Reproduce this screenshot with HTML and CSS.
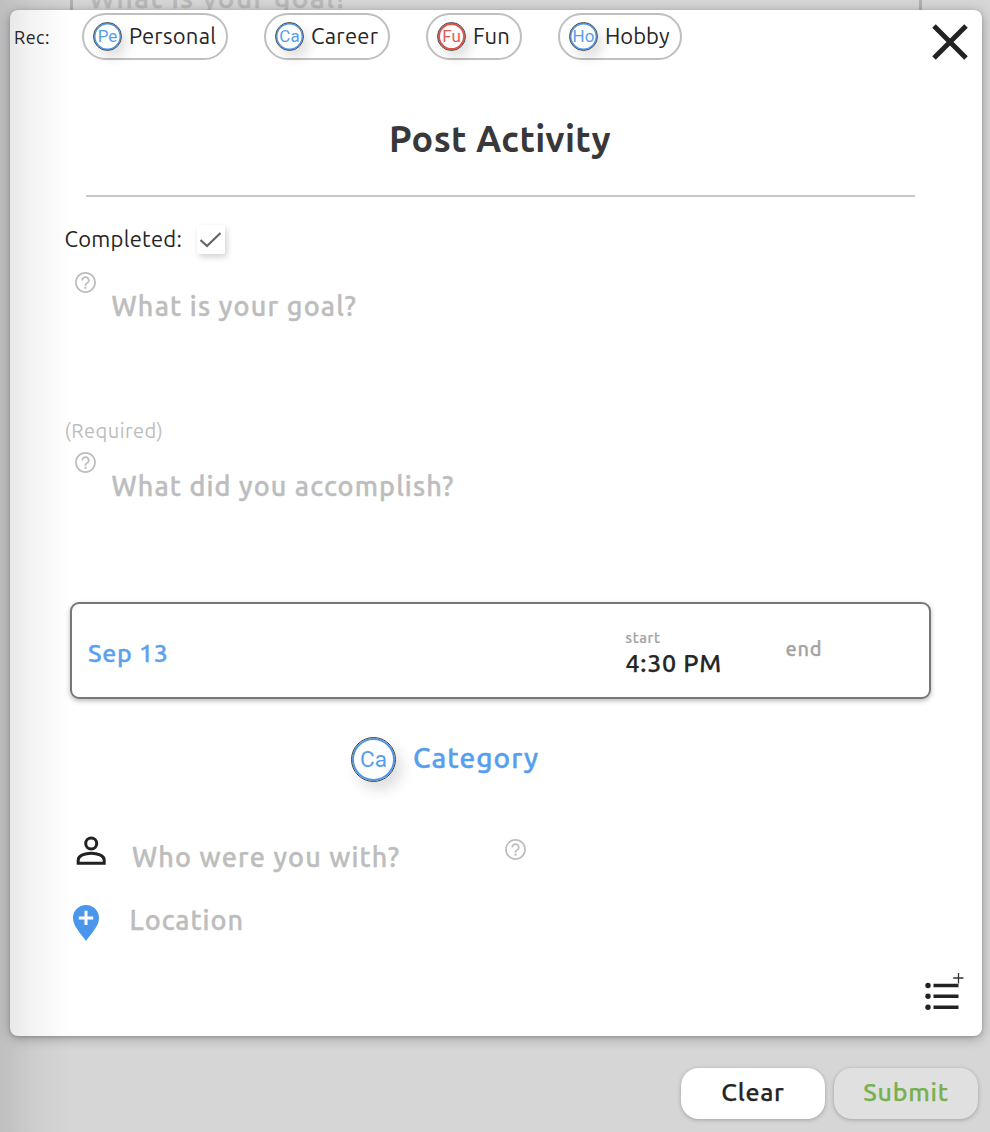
FILE: index.html
```html
<!DOCTYPE html>
<html lang="en">
<head>
<meta charset="utf-8">
<title>Post Activity</title>
<link rel="stylesheet" href="styles.css">
</head>
<body>
<svg class="symbols" aria-hidden="true">
  <symbol id="help" viewBox="0 0 24 24"><path d="M11 18h2v-2h-2v2zm1-16C6.48 2 2 6.48 2 12s4.48 10 10 10 10-4.480 10-10S17.520 2 12 2zm0 18.300c-4.580 0-8.300-3.720-8.300-8.300S7.420 3.700 12 3.700s8.300 3.720 8.300 8.300-3.720 8.300-8.300 8.300zM12 6c-2.210 0-4 1.790-4 4h1.700c0-1.270 1.030-2.300 2.300-2.300s2.300 1.030 2.300 2.300c0 2-3.150 1.800-3.150 5h1.700c0-2.200 3.150-2.500 3.150-5 0-2.210-1.790-4-4-4z"/></symbol>
</svg>
<div class="backdrop"><div class="behind"><span class="t-behind">What is your goal?</span></div></div>
<main class="modal">
  <header class="recs">
    <span class="rec-label">Rec:</span>
    <div class="chips">
      <div class="chip chip-personal"><i class="badge">Pe</i><span>Personal</span></div>
      <div class="chip chip-career"><i class="badge">Ca</i><span>Career</span></div>
      <div class="chip chip-fun"><i class="badge red">Fu</i><span>Fun</span></div>
      <div class="chip chip-hobby"><i class="badge">Ho</i><span>Hobby</span></div>
    </div>
    <svg class="close" viewBox="0 0 36 36"><path d="M2 2 34 34M34 2 2 34"/></svg>
  </header>
  <h1 class="title"><span>Post Activity</span></h1>
  <div class="rule"></div>
  <div class="completed">
    <span class="completed-label">Completed:</span>
    <span class="checkbox"><svg viewBox="0 0 28 28"><path d="M3.500 15 10 21 23.500 8"/></svg></span>
  </div>
  <div class="field"><svg class="help"><use href="#help"/></svg><span class="t-goal">What is your goal?</span></div>
  <div class="required"><span>(Required)</span></div>
  <div class="field field-done"><svg class="help"><use href="#help"/></svg><span class="t-done">What did you accomplish?</span></div>
  <section class="when">
    <span class="date">Sep 13</span>
    <div class="start"><span class="start-label">start</span><span class="time">4:30 PM</span></div>
    <span class="end">end</span>
  </section>
  <div class="category"><i class="badge big">Ca</i><span>Category</span></div>
  <div class="who">
    <svg class="person" viewBox="0 0 30 30"><circle cx="15.200" cy="7.500" r="5.500"/><path d="M2.200 27.300V24C2.200 19.500 9.200 17.300 15.200 17.300S28.200 19.500 28.200 24V27.300Z"/></svg>
    <span class="t-who">Who were you with?</span>
    <svg class="help"><use href="#help"/></svg>
  </div>
  <div class="where">
    <svg class="pin" viewBox="0 0 26 36"><path class="drop" d="M13 0C5.800 0 0 5.700 0 12.800 0 21.500 7.500 28 13 36 18.500 28 26 21.500 26 12.800 26 5.700 20.200 0 13 0Z"/><path class="plus" d="M13 5.700V20M5.800 12.900H20.200"/></svg>
    <span class="t-where">Location</span>
  </div>
  <svg class="list" viewBox="0 0 40 40"><path class="lines" d="M9.500 14.500H34.500M9.500 25.300H34.500M9.500 36.200H34.500"/><circle cx="4" cy="14.500" r="2.700"/><circle cx="4" cy="25.300" r="2.700"/><circle cx="4" cy="36.200" r="2.700"/><path class="add" d="M34.500 2V12.500M29.200 7H39.500"/></svg>
</main>
<footer class="actions">
  <button class="btn clear"><span>Clear</span></button>
  <button class="btn submit"><span>Submit</span></button>
</footer>
</body>
</html>
```
FILE: styles.css
```css
* { box-sizing: border-box; }
body {
  margin: 0;
  width: 990px;
  height: 1132px;
  padding: 10px 8px 0 10px;
  overflow: hidden;
  position: relative;
  background: #d6d6d6;
  color: #252525;
  font-family: Ubuntu, "Noto Sans", sans-serif;
}
/* soft shade along the left window edge */
body::after {
  content: "";
  position: absolute;
  inset: 0 auto 0 0;
  width: 72px;
  background: linear-gradient(90deg, rgba(0,0,0,.11), rgba(0,0,0,.045) 45%, rgba(0,0,0,0));
  pointer-events: none;
}
span, i { white-space: nowrap; }
.symbols { position: absolute; width: 0; height: 0; }
.backdrop { position: absolute; left: 70px; top: 0; width: 852px; height: 14px; }
.behind { display: flex; height: 14px; border: solid #b0b0b0; border-width: 0 3px; padding-left: 16px; }
.t-behind { margin-top: -21px; font-size: 28px; font-weight: 500; line-height: 38px; letter-spacing: 1.500px; color: #b9b9b9; -webkit-text-stroke: .5px #b9b9b9; }
.modal {
  position: relative;
  height: 1026px;
  border-radius: 8px;
  background: #fff;
  box-shadow: 0 2px 12px rgba(0,0,0,.3), 0 1px 3px rgba(0,0,0,.15);
  display: flex;
  flex-direction: column;
}
.recs { display: flex; height: 50px; padding-left: 4px; flex: none; }
.rec-label { width: 68px; font-size: 18px; line-height: 54px; letter-spacing: .5px; }
.chips { display: flex; gap: 36px; padding-top: 3px; flex: 1; }
.chip {
  height: 47px;
  border: 2px solid #bfbfbf;
  border-radius: 24px;
  display: flex;
  align-items: center;
  padding-left: 9px;
  gap: 7px;
  font-size: 22px;
  letter-spacing: .25px;
}
.chip span { line-height: 43px; margin-top: -2px; }
.chip-personal { width: 146px; }
.chip-career { width: 126px; }
.chip-fun { width: 96px; }
.chip-hobby { width: 124px; letter-spacing: 0; }
.badge {
  flex: none;
  width: 29px;
  height: 29px;
  border-radius: 50%;
  border: 1px solid #444;
  box-shadow: inset 0 0 0 1.500px #4c97ec, 5px 7px 12px rgba(0,0,0,.12);
  color: #579deb;
  font: 400 17px/27px Roboto, sans-serif;
  letter-spacing: 0;
  text-align: center;
}
.badge.red { color: #e25a52; box-shadow: inset 0 0 0 2px #e64f43, 5px 7px 12px rgba(0,0,0,.12); }
.close { width: 36px; height: 36px; margin: 13.500px 14px 0 0; fill: none; stroke: #222; stroke-width: 5; }
.title { margin: 48.500px 0 0 8px; height: 61.500px; font-size: 36px; line-height: 60px; letter-spacing: .4px; text-align: center; color: #38383a; }
.rule { height: 2px; margin: 25px 67px 0 76px; background: #c9c9c9; flex: none; }
.completed { display: flex; height: 30px; margin: 28px 0 0 54.500px; flex: none; }
.completed-label { width: 132.500px; font-size: 22px; line-height: 28px; letter-spacing: .25px; }
.checkbox { width: 28px; height: 29px; border-radius: 2px; background: #fff; box-shadow: 2px 3px 6px rgba(0,0,0,.18); }
.checkbox svg { display: block; width: 28px; height: 28px; fill: none; stroke: #666; stroke-width: 2.200; }
.help { width: 25px; height: 25px; fill: #bdbdbd; flex: none; }
.field { display: flex; height: 148px; margin: 15px 0 0 63px; gap: 13.500px; flex: none; color: #bdbdbd; font-size: 27px; font-weight: 500; }
.field span { line-height: 41px; margin-top: 16px; letter-spacing: 1.200px; -webkit-text-stroke: .4px #bdbdbd; }
.required { margin-left: 54.500px; height: 26px; flex: none; font-size: 20px; line-height: 26px; letter-spacing: .45px; color: #bdbdbd; }
.field-done { height: 152px; margin-top: 6px; }
.field-done span { letter-spacing: 1.120px; }
.when {
  display: flex;
  width: 861px;
  height: 97px;
  margin: 0 0 0 60px;
  border: 2px solid #777;
  border-radius: 9px;
  box-shadow: 0 2px 5px rgba(0,0,0,.28);
  padding-left: 16px;
  flex: none;
  letter-spacing: .7px;
  font-weight: 500;
}
.date { width: 537.500px; font-size: 25px; line-height: 98px; color: #5ba2ee; -webkit-text-stroke: .35px #5ba2ee; }
.start { width: 160px; display: flex; flex-direction: column; padding-top: 23px; }
.start-label { font-size: 14.500px; line-height: 22px; color: #a3a3a3; -webkit-text-stroke: .2px #a3a3a3; }
.time { font-size: 25px; line-height: 28px; -webkit-text-stroke: .25px #252525; }
.end { font-size: 20px; line-height: 89px; color: #a3a3a3; -webkit-text-stroke: .25px #a3a3a3; }
.category { display: flex; margin: 38px 0 0 341px; height: 46px; gap: 17px; color: #569eee; font-size: 28px; line-height: 41px; letter-spacing: 1px; font-weight: 500; flex: none; }
.category span { -webkit-text-stroke: .4px #569eee; }
.badge.big { width: 45px; height: 45px; font-size: 22.500px; line-height: 42px; box-shadow: inset 0 0 0 2px #4c97ec, 6px 8px 14px rgba(0,0,0,.13); }
.who { display: flex; height: 50px; margin: 53px 0 0 66px; flex: none; color: #bdbdbd; font-size: 27px; font-weight: 500; }
.person { width: 30px; height: 30px; fill: none; stroke: #222; stroke-width: 3; }
.t-who { width: 371px; margin-left: 26px; line-height: 43px; letter-spacing: 1.150px; -webkit-text-stroke: .4px #bdbdbd; }
.who .help { margin-top: 1px; }
.where { display: flex; height: 40px; margin: 18px 0 0 63px; color: #bdbdbd; font-size: 27px; font-weight: 500; gap: 30.500px; flex: none; }
.pin { width: 26px; height: 36px; margin-top: 1px; }
.drop { fill: #4a96ec; }
.plus { stroke: #fff; stroke-width: 3; fill: none; }
.t-where { line-height: 33px; letter-spacing: 1px; -webkit-text-stroke: .4px #bdbdbd; }
.list { width: 40px; height: 40px; margin: 27px 18px 0 auto; fill: #222; flex: none; }
.lines { stroke: #222; stroke-width: 3.500; }
.add { stroke: #333; stroke-width: 1.300; }
.actions { display: flex; justify-content: flex-end; gap: 9px; padding: 32px 4px 0 0; }
.btn {
  width: 144px;
  height: 51px;
  border: 0;
  border-radius: 18px;
  padding: 0 0 2px;
  background: #fff;
  box-shadow: 0 1px 4px rgba(0,0,0,.25);
  font: 500 25px/49px Ubuntu, "Noto Sans", sans-serif;
  letter-spacing: .75px;
  color: #252525;
  -webkit-text-stroke: .25px #252525;
}
.submit { background: #e0e0e0; color: #77b04e; -webkit-text-stroke-color: #77b04e; }
```
